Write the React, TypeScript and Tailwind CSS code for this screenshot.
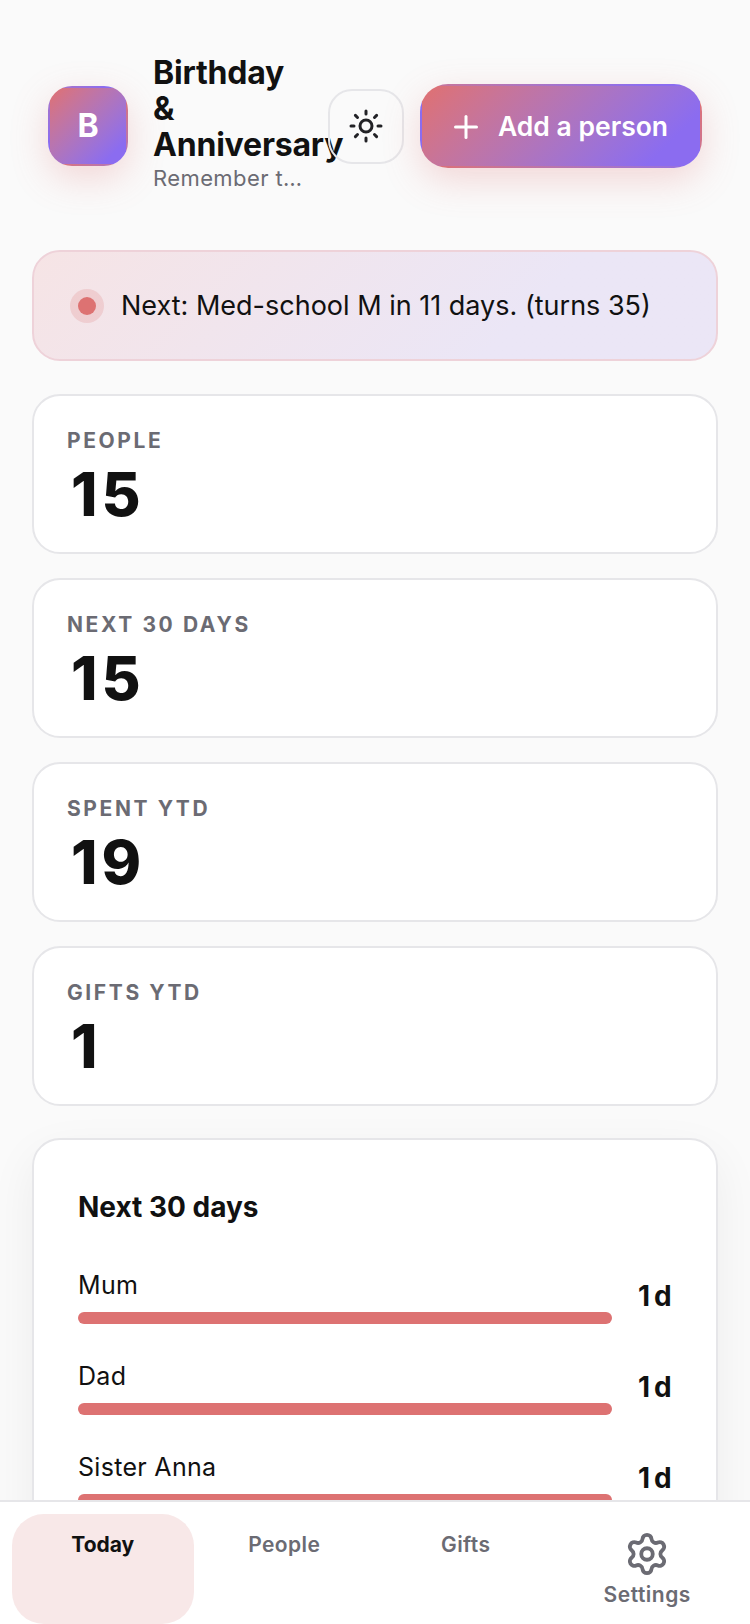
import { Plus, Settings, Sun } from 'lucide-react';

const FONT = "font-['Inter','Liberation_Sans',sans-serif]";

const stats = [
  { label: 'PEOPLE', value: '15' },
  { label: 'NEXT 30 DAYS', value: '15' },
  { label: 'SPENT YTD', value: '19' },
  { label: 'GIFTS YTD', value: '1' },
];

const upcoming = [
  { name: 'Mum', days: '1d' },
  { name: 'Dad', days: '1d' },
  { name: 'Sister Anna', days: '1d' },
];

function Header() {
  return (
    <header className="mb-[57px] flex items-center px-4">
      <div className="flex h-20 w-20 shrink-0 items-center justify-center rounded-[24px] border-2 border-transparent bg-linear-135 from-[#e07070] to-[#8b6cf0] to-85% text-[32px] font-bold text-white shadow-[0_12px_36px_rgba(224,112,112,0.25)]">
        B
      </div>
      <div className="mt-[-4px] ml-[25px] min-w-0 flex-1">
        <h1 className="text-[32px] leading-[36px] font-bold tracking-[-0.2px] text-[#111111]">Birthday &amp; Anniversary</h1>
        <p className="truncate text-[22px] leading-[30px] tracking-[0.4px] text-[#6b6b73]">Remember the people you love</p>
      </div>
      <button className="ml-6 flex h-[75px] w-[76px] shrink-0 items-center justify-center rounded-[24px] border-2 border-[#e6e6e9] text-[#222226]">
        <Sun size={36} strokeWidth={2} />
      </button>
      <button className="ml-4 flex h-[84px] w-[282px] shrink-0 items-center justify-center gap-[14px] rounded-[28px] border-2 border-transparent bg-linear-135 from-[#e07070] to-[#8b6cf0] to-85% pt-[2px] pr-[6px] text-[26.5px] font-semibold text-white shadow-[0_12px_36px_rgba(224,112,112,0.25)]">
        <Plus size={36} strokeWidth={2} />
        Add a person
      </button>
    </header>
  );
}

function NextBanner() {
  return (
    <div className="mb-[33px] flex h-[111px] items-center gap-[25px] rounded-[28px] border-2 border-[#eed2d9] bg-linear-135 from-[#f6e4e5] to-[#ebe6f6] to-70% pl-[44px]">
      <span className="h-[18px] w-[18px] rounded-full bg-[#dd7272] shadow-[0_0_0_8px_rgba(221,114,114,0.2)]" />
      <span className="text-[27px] leading-[36px] text-[#111111]">Next: Med-school M in 11 days. (turns 35)</span>
    </div>
  );
}

function StatCard({ label, value }: { label: string; value: string }) {
  return (
    <div className="h-[160px] rounded-[28px] border-2 border-[#e6e6e9] bg-white px-[33px] pt-[30px]">
      <div className="text-[21px] leading-[30px] font-bold tracking-[2.6px] text-[#6b6b73]">{label}</div>
      <div className="mt-1 pl-1 text-[60px] leading-[68px] font-extrabold tracking-[4px] text-[#111111]">{value}</div>
    </div>
  );
}

function UpcomingPanel() {
  return (
    <section className="mt-8 rounded-[28px] border-2 border-[#e6e6e9] bg-white p-[44px] shadow-[0_16px_48px_rgba(20,20,30,0.06)]">
      <h2 className="mt-[1px] mb-[38px] text-[28px] leading-[44px] font-bold text-[#111111]">Next 30 days</h2>
      <div className="flex flex-col gap-[34px]">
        {upcoming.map((row) => (
          <div key={row.name} className="flex items-center gap-[25px]">
            <div className="flex-1">
              <div className="mb-[9px] text-[25px] leading-[36px] tracking-[0.3px] text-[#111111]">{row.name}</div>
              <div className="h-3 rounded-full bg-[#dd7272]" />
            </div>
            <div className="w-[35px] pl-[1px] text-[28px] leading-[36px] font-bold tracking-[4px] whitespace-nowrap text-[#111111]">{row.days}</div>
          </div>
        ))}
      </div>
    </section>
  );
}

function BottomNav() {
  return (
    <nav className="grid shrink-0 grid-cols-4 border-t-2 border-[#e6e6e9] bg-white px-3 pt-3">
      <a className="flex h-[110px] flex-col items-center rounded-[32px] bg-[#f8e8e8] pt-4 text-[21px] leading-[30px] font-bold text-[#111111]">Today</a>
      <a className="flex flex-col items-center pt-4 text-[21px] leading-[30px] font-semibold tracking-[0.4px] text-[#6b6b73]">People</a>
      <a className="flex flex-col items-center pt-4 text-[21px] leading-[30px] font-semibold tracking-[0.4px] text-[#6b6b73]">Gifts</a>
      <a className="flex flex-col items-center gap-[3px] pt-[17px] text-[21px] leading-[30px] font-semibold tracking-[0.5px] text-[#6b6b73]">
        <Settings size={46} strokeWidth={2} />
        Settings
      </a>
    </nav>
  );
}

export default function App() {
  return (
    <div className={`flex h-[1624px] w-[750px] flex-col overflow-hidden bg-[#fafafa] ${FONT}`}>
      <main className="min-h-0 flex-1 overflow-hidden px-8 pt-[59px]">
        <Header />
        <NextBanner />
        <div className="flex flex-col gap-6">
          {stats.map((s) => (
            <StatCard key={s.label} label={s.label} value={s.value} />
          ))}
        </div>
        <UpcomingPanel />
      </main>
      <BottomNav />
    </div>
  );
}
